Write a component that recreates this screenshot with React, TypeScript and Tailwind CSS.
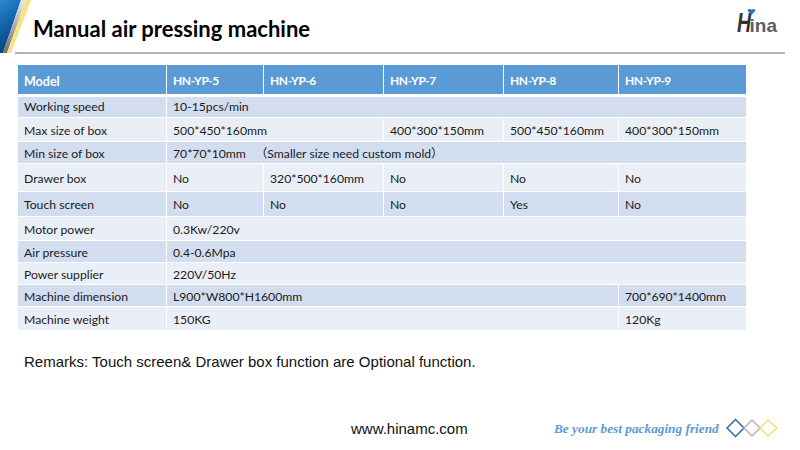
const COLS = "grid grid-cols-[148px_96px_119px_119px_114px_127px] gap-x-px";
const cell = "flex items-center text-[12.2px] text-[#1a1a1a] pl-[6px] whitespace-nowrap";
type C = [string, number?];
type R = { h: string; cells: C[]; dark: boolean };
const rows: R[] = [
  { h: "h-[20px]", dark: true, cells: [["Working speed"], ["10-15pcs/min", 5]] },
  { h: "h-[23px]", dark: false, cells: [["Max size of box"], ["500*450*160mm", 2], ["400*300*150mm"], ["500*450*160mm"], ["400*300*150mm"]] },
  { h: "h-[21px]", dark: true, cells: [["Min size of box"], ["70*70*10mm \u00a0\u00a0（Smaller size need custom mold）", 5]] },
  { h: "h-[27px]", dark: false, cells: [["Drawer box"], ["No"], ["320*500*160mm"], ["No"], ["No"], ["No"]] },
  { h: "h-[24px]", dark: true, cells: [["Touch screen"], ["No"], ["No"], ["No"], ["Yes"], ["No"]] },
  { h: "h-[23px]", dark: false, cells: [["Motor power"], ["0.3Kw/220v", 5]] },
  { h: "h-[21px]", dark: true, cells: [["Air pressure"], ["0.4-0.6Mpa", 5]] },
  { h: "h-[21px]", dark: false, cells: [["Power supplier"], ["220V/50Hz", 5]] },
  { h: "h-[21px]", dark: true, cells: [["Machine dimension"], ["L900*W800*H1600mm", 4], ["700*690*1400mm"]] },
  { h: "h-[23px]", dark: false, cells: [["Machine weight"], ["150KG", 4], ["120Kg"]] },
];
const SPAN: Record<number, string> = { 1: "col-span-1", 2: "col-span-2", 4: "col-span-4", 5: "col-span-5" };
const sans = "[font-family:Lato,'Noto_Sans_CJK_SC',sans-serif]";

export default function App() {
  return (
    <div className={`relative w-[800px] h-[450px] bg-white overflow-hidden ${sans}`}>
      {/* corner ribbon */}
      <svg className="absolute left-0 top-0" width="32" height="54" viewBox="0 0 32 54">
        <defs>
          <linearGradient id="b" x1="0" y1="0" x2="0.3" y2="1">
            <stop offset="0" stopColor="#2a8ad0" />
            <stop offset="0.55" stopColor="#0f5fa6" />
            <stop offset="1" stopColor="#0a3f70" />
          </linearGradient>
          <linearGradient id="g" x1="0" y1="0" x2="0" y2="1">
            <stop offset="0" stopColor="#e8e8e8" />
            <stop offset="1" stopColor="#6e6e6e" />
          </linearGradient>
        </defs>
        <polygon points="0,0 21,0 3,53 0,53" fill="url(#b)" />
        <polygon points="21,0 26,0 7,53 3,53" fill="url(#g)" />
        <polygon points="26,0 31,0 11,53 7,53" fill="#f6e27f" />
      </svg>
      <div className="ml-[15px] mr-[15px] h-[54px] border-b-2 border-[#b4b4b4] flex items-end justify-between">
        <h1 className="ml-[18px] mb-[10px] text-[22px] leading-[26px] font-bold text-black">Manual air pressing machine</h1>
        <div className="relative mb-[16px] mr-[8px] flex items-baseline h-[26px] leading-[26px] [font-family:'Liberation_Sans',sans-serif]">
          <span className="inline-block w-[13px] origin-left scale-x-[0.72] text-[27px] font-bold italic text-[#333]">H</span>
          <span className="text-[19px] font-bold text-[#5f5f5f]">ina</span>
          <svg className="absolute left-[10px] top-[-2px]" width="9" height="7" viewBox="0 0 9 7">
            <path d="M4.5 7 L0.4 2.6 Q1 0 4.5 1.4 Q8 0 8.6 2.6 Z" fill="#1f78c4" />
          </svg>
        </div>
      </div>

      <div className="ml-[18px] mt-[11px] w-[728px]">
        <div className={`${COLS} h-[29px] mb-[3px]`}>
          {["Model", "HN-YP-5", "HN-YP-6", "HN-YP-7", "HN-YP-8", "HN-YP-9"].map((t, i) => (
            <div key={t} className={`flex items-center bg-[#5b9bd5] text-white font-bold pl-[6px] ${i === 0 ? "pt-[5px] text-[12.5px]" : "pt-[3px] text-[12px] tracking-[-0.4px]"}`}>{t}</div>
          ))}
        </div>
        <div className="flex flex-col gap-y-px">
          {rows.map((r, i) => (
            <div key={i} className={`${COLS} ${r.h}`}>
              {r.cells.map(([t, span], j) => (
                <div key={j} className={`${cell} ${i === 0 ? "pt-[1px]" : "pt-[3px]"} ${SPAN[span ?? 1]} ${r.dark ? "bg-[#d2deef]" : "bg-[#eaeff7]"}`}>{t}</div>
              ))}
            </div>
          ))}
        </div>
      </div>

      <p className="ml-[24px] mt-[23px] text-[15px] leading-[18px] text-[#111] [font-family:'Liberation_Sans',sans-serif]">
        Remarks: Touch screen&amp; Drawer box function are Optional function.
      </p>

      <div className="absolute left-[351px] top-[421px] text-[15px] leading-[16px] text-[#111] [font-family:'Liberation_Sans',sans-serif]">www.hinamc.com</div>
      <div className="absolute left-[554px] top-[421px] text-[13.3px] leading-[16px] font-bold italic text-[#5b9bd5] [font-family:'Liberation_Serif',serif]">Be your best packaging friend</div>
      <svg className="absolute left-[725px] top-[418px]" width="54" height="20" viewBox="0 0 54 20">
        <polygon points="2,10 10.5,1.5 19,10 10.5,18.5" fill="none" stroke="#2f6aa3" strokeWidth="1.5" />
        <polygon points="19,10 27,2 35,10 27,18" fill="none" stroke="#b4b4b4" strokeWidth="1.5" />
        <polygon points="35,10 43,2 52,10 43,18" fill="none" stroke="#f7dc6f" strokeWidth="1.5" />
      </svg>
    </div>
  );
}
